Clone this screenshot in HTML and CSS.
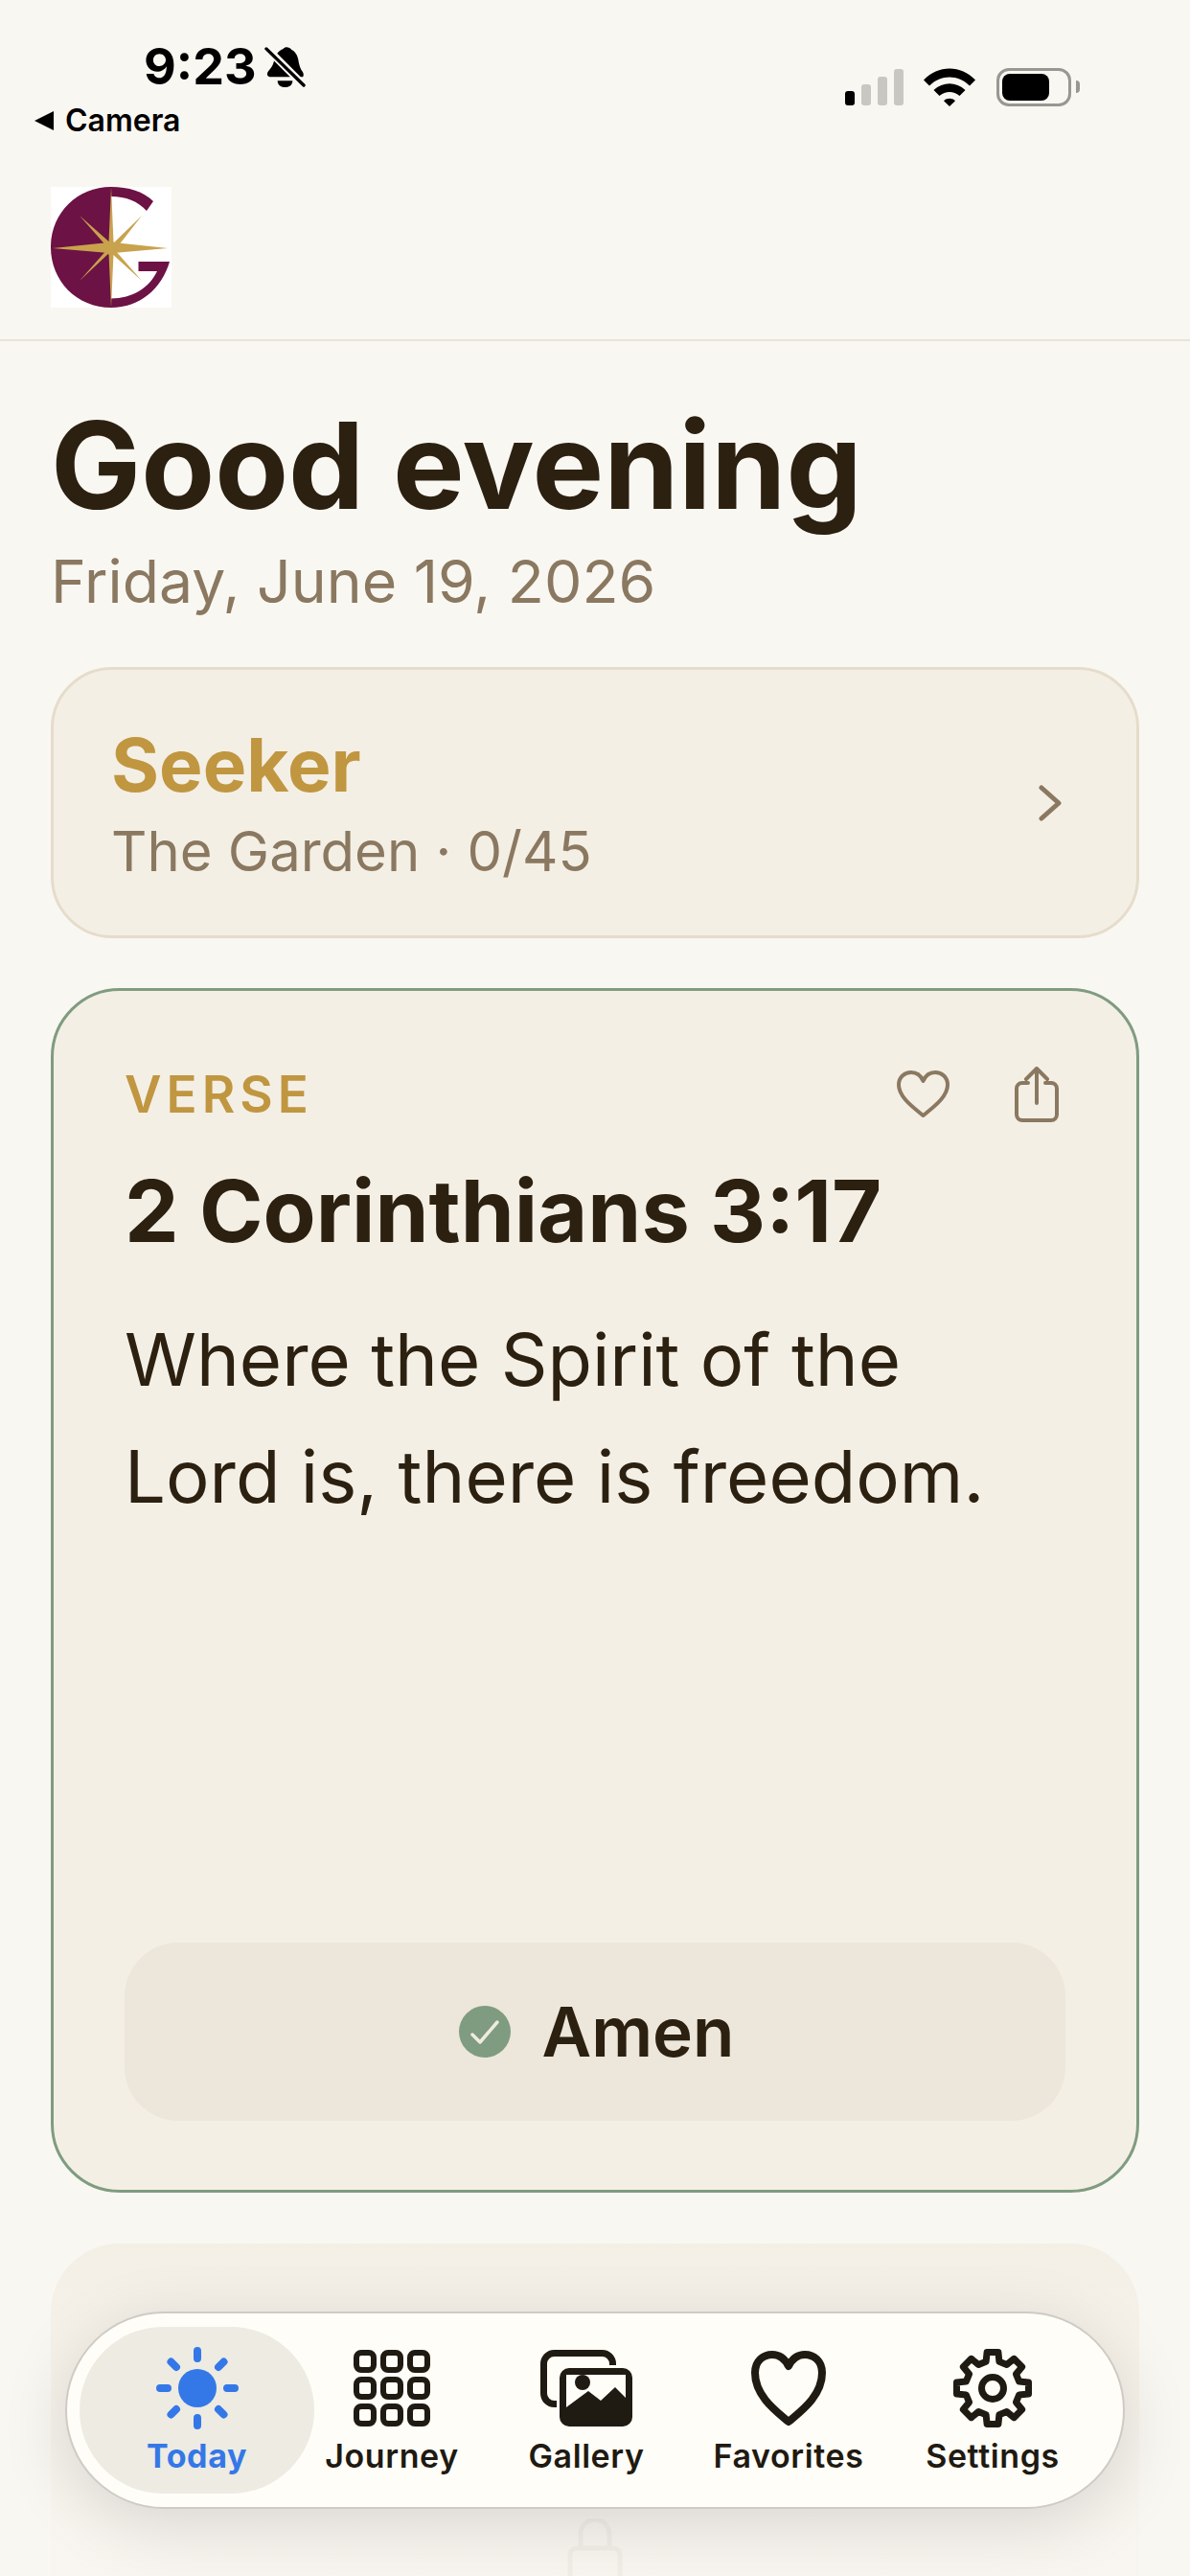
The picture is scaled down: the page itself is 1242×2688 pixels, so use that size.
FILE: index.html
```html
<!DOCTYPE html>
<html lang="en">
<head>
    <meta charset="UTF-8">
    <title>Today</title>
    <link rel="stylesheet" href="styles.css">
</head>
<body>
    <div class="screen">
        <header class="top">
            <div class="status">
                <div class="status-left">
                    <div class="clock">
                        <span class="time">9:23</span>
                        <svg class="bell" viewBox="0 0 44 44">
                            <path d="M20 3c2-3 7-2 9 1 3 1 6 5 7 10 1 6 2 10 5 14 1 2 1 4 0 5H7c-4 0-5-3-3-6 3-3 5-6 6-10 1-6 4-12 10-14z" fill="#000"/>
                            <path d="M14 37h16c0 4-3 7-8 7s-8-3-8-7z" fill="#000"/>
                            <path d="M0 0L44 44" stroke="#f9f7f2" stroke-width="8"/>
                            <path d="M2 3L42 42" stroke="#000" stroke-width="3.4" stroke-linecap="round"/>
                        </svg>
                    </div>
                    <div class="back-app"><span class="back-arrow"></span>Camera</div>
                </div>
                <div class="status-right">
                    <div class="signal">
                        <span class="bar bar-on"></span>
                        <span class="bar bar-2"></span>
                        <span class="bar bar-3"></span>
                        <span class="bar bar-4"></span>
                    </div>
                    <svg class="wifi" viewBox="0 0 54 40">
                        <path d="M0 12.5C15-3.5 39-3.5 54 12.5L48 18.5C36 6.5 18 6.5 6 18.5z" fill="#000"/>
                        <path d="M10.5 23C20 14 34 14 43.5 23L37.5 29C31 23.5 23 23.5 16.5 29z" fill="#000"/>
                        <path d="M21 34.2C24.5 31 29.5 31 33 34.2L27 40z" fill="#000"/>
                    </svg>
                    <div class="battery"><span class="battery-fill"></span></div>
                    <span class="battery-nub"></span>
                </div>
            </div>
            <svg class="logo" viewBox="0 0 126 126">
                <rect width="126" height="126" fill="#fff"/>
                <path d="M63 0C27 0 0 28 0 63s27 63 63 63c30 0 53-20 61-48H91.500v10H111c-8 17-26 28.500-48 28.500V10c15 0 28 5 37 15l7-10C97 5 81 0 63 0z" fill="#6c1244"/>
                <g fill="#c9a24d">
                    <polygon points="63,0 65.500,58 122,64 65.500,69 63,126 60.500,69 2,64 60.500,58"/>
                    <polygon points="30,30 64,60 95,30 67,66 95,98 62,68 30,98 60,64"/>
                    <circle cx="63" cy="64" r="7"/>
                </g>
            </svg>
        </header>

        <main class="content">
            <h1 class="greeting">Good evening</h1>
            <p class="date">Friday, June 19, 2026</p>

            <section class="level-card">
                <div>
                    <div class="level-name">Seeker</div>
                    <div class="level-sub">The Garden · 0/45</div>
                </div>
                <svg class="chevron" viewBox="0 0 24 38">
                    <path d="M3 3L21 19L3 35" fill="none" stroke="#8a7860" stroke-width="5" stroke-linecap="round" stroke-linejoin="round"/>
                </svg>
            </section>

            <section class="verse-card">
                <div class="verse-head">
                    <span class="verse-label">VERSE</span>
                    <div class="verse-actions">
                        <svg class="heart-small" viewBox="0 0 55 50">
                            <path d="M27.500 47C18 39 2 28 2 15 2 7 8 2 15 2c5 0 10 3 12.500 9C30 5 35 2 40 2c7 0 13 5 13 13 0 13-16 24-25.500 32z" fill="none" stroke="#8a7860" stroke-width="4" stroke-linejoin="round"/>
                        </svg>
                        <svg class="share" viewBox="0 0 46 58">
                            <path d="M14 17H8a6 6 0 0 0-6 6v27a6 6 0 0 0 6 6h30a6 6 0 0 0 6-6V23a6 6 0 0 0-6-6h-6" fill="none" stroke="#8a7860" stroke-width="4" stroke-linecap="round"/>
                            <path d="M23 38V3M12 13L23 2L34 13" fill="none" stroke="#8a7860" stroke-width="4" stroke-linecap="round" stroke-linejoin="round"/>
                        </svg>
                    </div>
                </div>
                <h2 class="verse-ref">2 Corinthians 3:17</h2>
                <p class="verse-text">Where the Spirit of the<br>Lord is, there is freedom.</p>
                <button class="amen">
                    <svg class="amen-check" viewBox="0 0 54 54">
                        <circle cx="27" cy="27" r="27" fill="#7f9c80"/>
                        <path d="M14 30L22 38L40 17" fill="none" stroke="#f0ebdf" stroke-width="3.500" stroke-linecap="round" stroke-linejoin="round"/>
                    </svg>
                    Amen
                </button>
            </section>

            <section class="next-card">
                <svg class="lock" viewBox="0 0 58 70">
                    <path d="M14 32V16a15 15 0 0 1 30 0v16" fill="none" stroke="#cfc9bd" stroke-width="5"/>
                    <rect x="3" y="31" width="52" height="50" rx="7" fill="none" stroke="#cfc9bd" stroke-width="5"/>
                </svg>
            </section>
        </main>

        <div class="fade"></div>

        <nav class="tabs">
            <a class="tab tab-active">
                <svg class="tab-icon" width="88" height="88" viewBox="0 0 88 88">
                    <circle cx="44" cy="44" r="20" fill="#3478e8"/>
                    <path d="M44 5V13M44 75V83M5 44H13M75 44H83M16.500 16.500L22 22M66 66L71.500 71.500M16.500 71.500L22 66M66 22L71.500 16.500" stroke="#3478e8" stroke-width="8" stroke-linecap="round"/>
                </svg>
                <span>Today</span>
            </a>
            <a class="tab">
                <svg class="tab-icon" width="80" height="88" viewBox="0 0 80 88">
                    <g fill="none" stroke="#1f1a12" stroke-width="6">
                        <rect x="3" y="7" width="18" height="18" rx="5"/>
                        <rect x="31" y="7" width="18" height="18" rx="5"/>
                        <rect x="59" y="7" width="18" height="18" rx="5"/>
                        <rect x="3" y="35" width="18" height="18" rx="5"/>
                        <rect x="31" y="35" width="18" height="18" rx="5"/>
                        <rect x="59" y="35" width="18" height="18" rx="5"/>
                        <rect x="3" y="63" width="18" height="18" rx="5"/>
                        <rect x="31" y="63" width="18" height="18" rx="5"/>
                        <rect x="59" y="63" width="18" height="18" rx="5"/>
                    </g>
                </svg>
                <span>Journey</span>
            </a>
            <a class="tab">
                <svg class="tab-icon" width="96" height="88" viewBox="0 0 96 88">
                    <rect x="3.500" y="7.500" width="72" height="53" rx="11" fill="none" stroke="#1f1a12" stroke-width="7"/>
                    <rect x="17" y="20" width="79" height="68" rx="11" fill="#fffdf7"/>
                    <rect x="20" y="23" width="76" height="61" rx="10" fill="#1f1a12"/>
                    <path d="M27 30H89V54L78 43L63 57L50 47L27 64z" fill="#fffdf7"/>
                    <circle cx="44" cy="38" r="8" fill="#1f1a12"/>
                </svg>
                <span>Gallery</span>
            </a>
            <a class="tab">
                <svg class="tab-icon" width="78" height="88" viewBox="0 0 78 88">
                    <path d="M39 79C26 68 4 52 4 28 4 15 13 9 22 9c7 0 13 4 17 12 4-8 10-12 17-12 9 0 18 6 18 19 0 24-22 40-35 51z" fill="none" stroke="#1f1a12" stroke-width="8" stroke-linejoin="round"/>
                </svg>
                <span>Favorites</span>
            </a>
            <a class="tab">
                <svg class="tab-icon" width="84" height="88" viewBox="-42 -44 84 88">
                    <polygon points="-6.900,-27.700 -5.900,-37.500 5.900,-37.500 6.900,-27.700 14.700,-24.500 22.300,-30.700 30.700,-22.300 24.500,-14.700 27.700,-6.900 37.500,-5.900 37.500,5.900 27.700,6.900 24.500,14.700 30.700,22.300 22.300,30.700 14.700,24.500 6.900,27.700 5.900,37.500 -5.900,37.500 -6.900,27.700 -14.700,24.500 -22.300,30.700 -30.700,22.300 -24.500,14.700 -27.700,6.900 -37.500,5.900 -37.500,-5.900 -27.700,-6.900 -24.500,-14.700 -30.700,-22.300 -22.300,-30.700 -14.700,-24.500" fill="none" stroke="#1f1a12" stroke-width="7" stroke-linejoin="round"/>
                    <circle cx="0" cy="0" r="11.500" fill="none" stroke="#1f1a12" stroke-width="7"/>
                </svg>
                <span>Settings</span>
            </a>
        </nav>
    </div>
</body>
</html>
```

FILE: styles.css
```css
* {
    box-sizing: border-box;
}
html, body {
    margin: 0;
    padding: 0;
}
body {
    font-family: Inter, "Liberation Sans", sans-serif;
    background-color: #f9f7f2;
    color: #2c2010;
}
.screen {
    position: relative;
    width: 1242px;
    height: 2688px;
    overflow: hidden;
}

/* status bar + logo */
.top {
    height: 356px;
    border-bottom: 2px solid #e9e4d9;
}
.status {
    display: flex;
    justify-content: space-between;
    height: 195px;
}
.status-left {
    padding: 40px 0 0 36px;
}
.clock {
    display: flex;
    align-items: center;
    gap: 9px;
    padding-left: 114px;
    height: 58px;
}
.time {
    font-size: 52px;
    font-weight: 700;
    color: #000;
}
.bell {
    width: 43px;
    height: 43px;
}
.back-app {
    display: flex;
    align-items: center;
    gap: 12px;
    margin-top: 8px;
    font-size: 32px;
    font-weight: 600;
    color: #000;
}
.back-arrow {
    width: 0;
    height: 0;
    border-top: 10px solid transparent;
    border-bottom: 10px solid transparent;
    border-right: 20px solid #000;
}
.status-right {
    display: flex;
    align-items: flex-start;
    padding: 71px 115px 0 0;
}
.signal {
    display: flex;
    align-items: flex-end;
    gap: 7px;
    height: 39px;
    margin-right: 21px;
}
.bar {
    width: 10px;
    border-radius: 3px;
    background-color: #c8c7c2;
}
.bar-on {
    height: 15px;
    background-color: #000;
}
.bar-2 {
    height: 22px;
}
.bar-3 {
    height: 30px;
}
.bar-4 {
    height: 38px;
}
.wifi {
    width: 54px;
    height: 40px;
    margin-right: 22px;
}
.battery {
    width: 78px;
    height: 40px;
    border: 3px solid #999792;
    border-radius: 13px;
    padding: 3px;
    margin-right: 5px;
}
.battery-fill {
    display: block;
    width: 49px;
    height: 28px;
    border-radius: 8px;
    background-color: #000;
}
.battery-nub {
    width: 4px;
    height: 13px;
    margin-top: 13px;
    border-radius: 0 4px 4px 0;
    background-color: #999792;
}
.logo {
    display: block;
    width: 126px;
    height: 126px;
    margin-left: 53px;
}

/* main scroll content */
.content {
    padding: 0 53px;
}
.greeting {
    margin: 0;
    padding-top: 57px;
    font-size: 125.5px;
    line-height: 145px;
    font-weight: 700;
}
.date {
    margin: 12px 0 0 0;
    font-size: 62.5px;
    line-height: 72px;
    color: #8a7860;
}
.level-card {
    display: flex;
    justify-content: space-between;
    align-items: center;
    height: 283px;
    margin-top: 54px;
    padding: 0 78px 0 60px;
    background-color: #f4efe5;
    border: 3px solid #e6dccb;
    border-radius: 64px;
}
.level-name {
    font-size: 76.5px;
    line-height: 88px;
    font-weight: 700;
    color: #c09640;
}
.level-sub {
    margin-top: 12px;
    font-size: 58px;
    line-height: 68px;
    color: #8a7860;
}
.chevron {
    width: 24px;
    height: 38px;
}
.verse-card {
    display: flex;
    flex-direction: column;
    height: 1257px;
    margin-top: 52px;
    padding: 76px 74px 72px 74px;
    background-color: #f4efe5;
    border: 3px solid #7f9c80;
    border-radius: 72px;
}
.verse-head {
    display: flex;
    justify-content: space-between;
    align-items: center;
    height: 64px;
}
.verse-label {
    font-size: 53px;
    font-weight: 600;
    letter-spacing: 5px;
    color: #c09640;
}
.verse-actions {
    display: flex;
    align-items: center;
    gap: 68px;
    padding-right: 7px;
}
.heart-small {
    width: 55px;
    height: 50px;
}
.share {
    width: 46px;
    height: 58px;
}
.verse-ref {
    margin: 36px 0 0 0;
    font-size: 90px;
    line-height: 108px;
    font-weight: 700;
}
.verse-text {
    margin: 39px 0 0 0;
    font-size: 76px;
    line-height: 122px;
    font-weight: 400;
}
.amen {
    display: flex;
    justify-content: center;
    align-items: center;
    gap: 32px;
    height: 186px;
    margin-top: auto;
    padding-left: 10px;
    border: none;
    border-radius: 56px;
    background-color: #ede6da;
    color: #2c2010;
    font-family: inherit;
    font-size: 71px;
    font-weight: 600;
}
.amen-check {
    width: 54px;
    height: 54px;
}
.next-card {
    display: flex;
    justify-content: center;
    height: 500px;
    margin-top: 53px;
    padding-top: 287px;
    background-color: #f4efe5;
    border-radius: 72px;
}
.lock {
    width: 58px;
    height: 70px;
}

/* bottom fade under the tab bar */
.fade {
    position: absolute;
    left: 0;
    right: 0;
    bottom: 0;
    height: 360px;
    background: linear-gradient(to bottom, rgba(249,247,242,0) 0%, rgba(249,247,242,0.8) 85%);
}

/* tab bar */
.tabs {
    position: absolute;
    left: 68px;
    top: 2412px;
    display: grid;
    grid-template-columns: 245px 162px 244px 178px 248px;
    width: 1106px;
    height: 206px;
    padding: 14px 13px;
    background-color: #fffdf7;
    border: 2px solid #cfcbc4;
    border-radius: 103px;
    box-shadow: 0 16px 70px rgba(0,0,0,0.13);
}
.tab {
    display: flex;
    flex-direction: column;
    align-items: center;
    padding-top: 20px;
    color: #1f1a12;
    font-size: 34px;
    font-weight: 600;
    line-height: 38px;
    letter-spacing: 0.6px;
}
.tab-icon {
    display: block;
    margin-bottom: 8px;
}
.tab-active {
    background-color: #edebe2;
    border-radius: 89px;
    color: #3478e8;
    font-weight: 700;
}
```
